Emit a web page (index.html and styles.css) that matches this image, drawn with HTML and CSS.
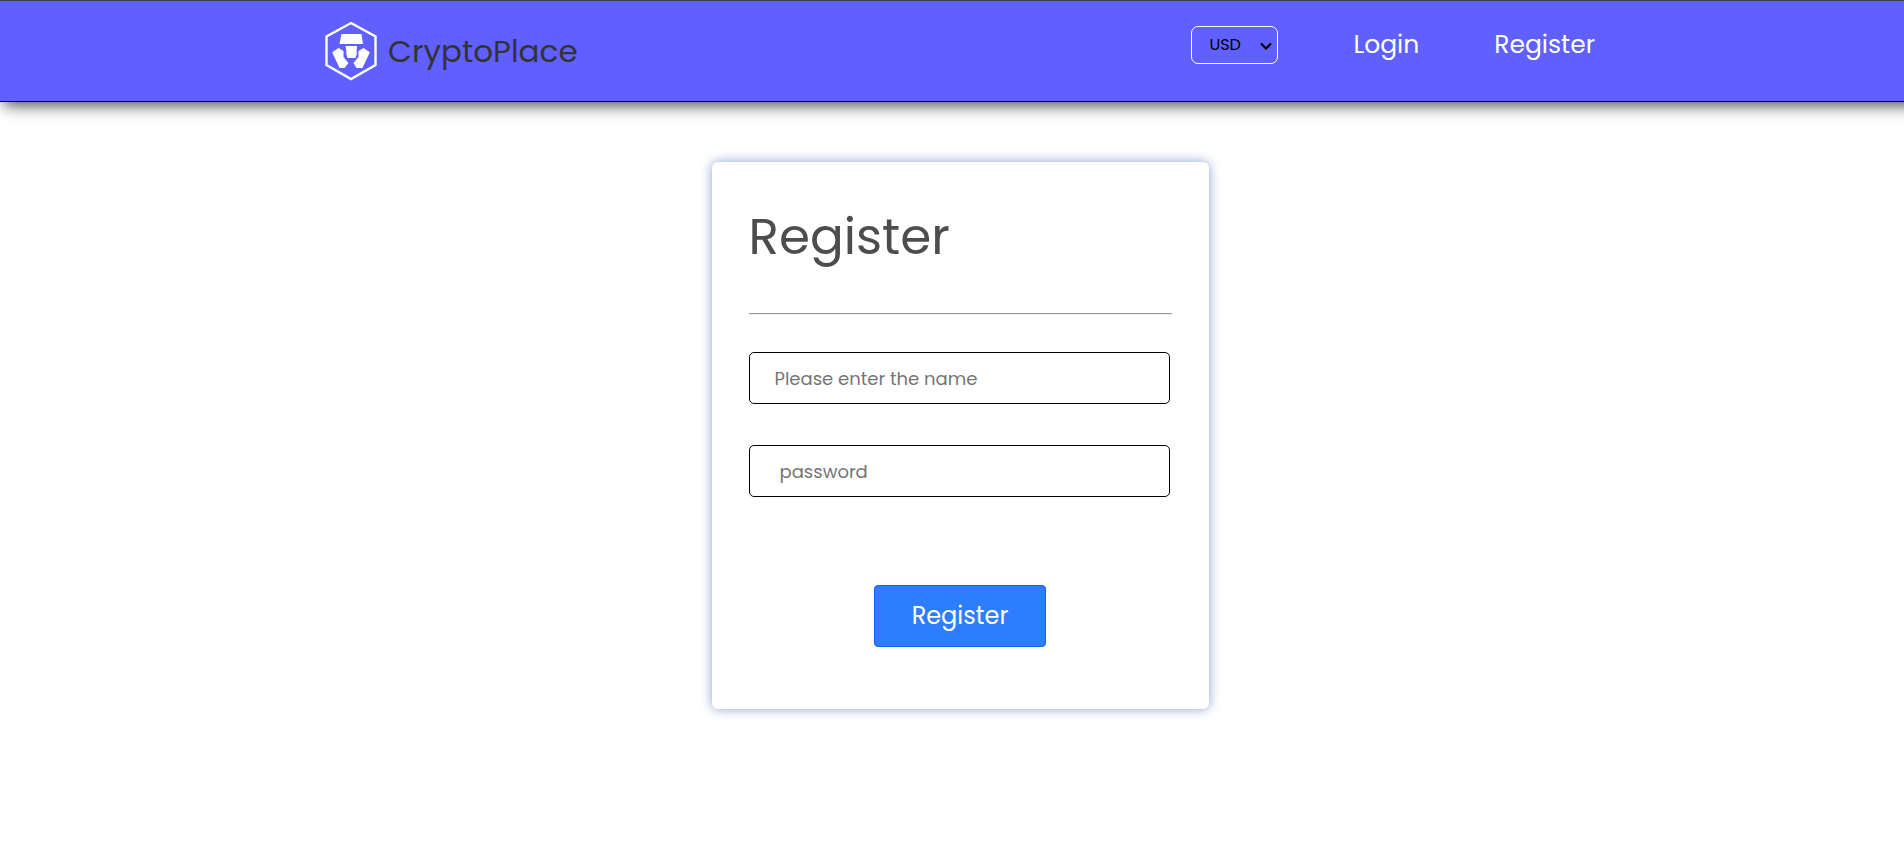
FILE: index.html
```html
<!DOCTYPE html>
<html lang="en">
<head>
<meta charset="utf-8">
<meta name="viewport" content="width=device-width, initial-scale=1">
<title>CryptoPlace</title>
<link rel="stylesheet" href="styles.css">
</head>
<body>
<header class="header">
  <div class="header-inner">
    <a class="brand" href="#">
      <svg class="brand-icon" viewBox="0 0 52 60" aria-hidden="true">
        <path d="M26 2 50.500 15.500V44L26 58 1.500 44V15.500Z" fill="none" stroke="#fff" stroke-width="2.400"/>
        <path fill="#fff" d="M16.500 13h20l1.500 10H14.500ZM20.500 25h11.500l-.5 6 .5 1-1.500 5h-8l-1.500-5 .5-1ZM13.500 27l5 3v6l5 6-4 5h-5L7.500 32v-1ZM38.500 27l-5 3v6l-5 6 3 5h6l7-15v-1Z"/>
      </svg>
      <span class="brand-name">CryptoPlace</span>
    </a>
    <nav class="nav">
      <span class="currency">
        <select class="currency-select" aria-label="Currency">
          <option>USD</option>
          <option>EUR</option>
          <option>INR</option>
        </select>
        <svg class="currency-arrow" viewBox="0 0 12 8" aria-hidden="true"><path d="M1 1.500 6 6.500 11 1.500" fill="none" stroke="#000" stroke-width="2.200"/></svg>
      </span>
      <a class="nav-link" href="#login">Login</a>
      <a class="nav-link" href="#register">Register</a>
    </nav>
  </div>
</header>
<main class="page">
  <form class="card">
    <h1 class="title">Register</h1>
    <hr class="rule">
    <div class="fields">
      <input class="field" type="text" placeholder="Please enter the name" aria-label="Name">
      <input class="field field-password" type="password" placeholder="password" aria-label="Password">
    </div>
    <button class="submit" type="submit">Register</button>
  </form>
</main>
</body>
</html>
```
FILE: styles.css
```css
* {
  box-sizing: border-box;
}

body {
  margin: 0;
  overflow-x: hidden;
  background: #fff;
  color: #4d4d4d;
  font-family: Poppins, Inter, "Liberation Sans", sans-serif;
}

.header {
  margin-right: -16px;
  background: #605fff;
  border-top: 1px solid #3f3f4a;
  border-bottom: 1px solid #000;
  box-shadow: 4px 3px 15px rgba(0, 0, 0, 0.75);
}

.header-inner {
  display: flex;
  justify-content: space-between;
  max-width: 1270px;
  min-height: 100px;
  margin: 0 auto;
}

.brand {
  display: flex;
  align-items: center;
  gap: 11px;
  color: #333;
  text-decoration: none;
}

.brand-icon {
  width: 52px;
  height: 60px;
}

.brand-name {
  font-size: 31px;
  line-height: 40px;
}

.nav {
  display: flex;
  align-items: flex-start;
  gap: 75px;
  padding-top: 25px;
}

.currency {
  position: relative;
  display: flex;
}

.currency-select {
  width: 87px;
  height: 38px;
  padding: 0 17px 2px;
  appearance: none;
  background: transparent;
  border: 1px solid #fff;
  border-radius: 7px;
  color: #000;
  font: inherit;
  font-size: 16px;
}

.currency-arrow {
  position: absolute;
  right: 6px;
  top: 16px;
  width: 12px;
  height: 8px;
  pointer-events: none;
}

.nav-link {
  color: #fff;
  font-size: 25px;
  line-height: 38px;
  text-decoration: none;
}

.page {
  display: flex;
  justify-content: center;
  margin-right: -16px;
  padding: 60px 0;
}

.card {
  display: flex;
  flex-direction: column;
  width: 497px;
  padding: 37px 37px 62px;
  border-radius: 6px;
  background: #fff;
  box-shadow: 0 0 12px #8c9fd0;
}

.title {
  margin: 0;
  font-size: 50px;
  font-weight: 400;
  line-height: 76px;
}

.rule {
  width: 100%;
  margin: 38px 0 37px;
  border: 0;
  border-top: 1px solid #9a9a9a;
  border-bottom: 1px solid #eee;
}

.fields {
  display: grid;
  gap: 41px;
  padding-right: 2px;
}

.field {
  width: 100%;
  height: 52px;
  padding: 0 25px;
  border: 1px solid #000;
  border-radius: 5px;
  background: #fff;
  color: #000;
  font: inherit;
  font-size: 18px;
}

.field-password {
  padding-left: 30px;
}

.field::placeholder {
  color: #757575;
}

.submit {
  align-self: center;
  margin-top: 88px;
  padding: 11px 37px;
  border: 1px solid #0d62f7;
  border-radius: 4px;
  background: #2f7dff;
  color: #fff;
  font: inherit;
  font-size: 24px;
  line-height: 38px;
}
```
